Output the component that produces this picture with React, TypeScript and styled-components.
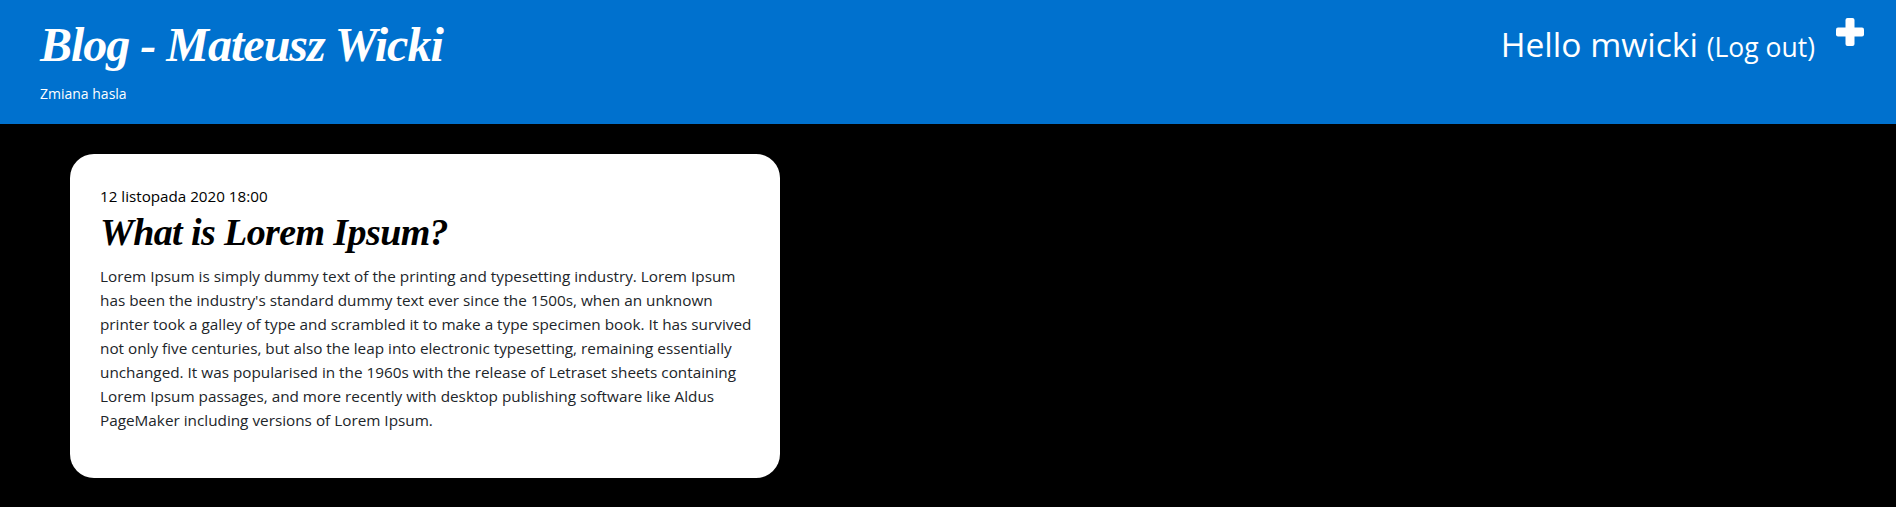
import { createGlobalStyle } from "styled-components";
import styled from "styled-components";

const GlobalStyle = createGlobalStyle`
	html, body {
		margin: 0;
		padding: 0;
		background: #000;
		font-family: "Open Sans", "Noto Sans", sans-serif;
	}
`;

const Header = styled.header`
	height: 124px;
	background-color: #0071ce;
	color: #fff;
	display: flex;
	justify-content: space-between;
	padding: 0 32px 0 40px;
`;

const Brand = styled.div`
	display: flex;
	flex-direction: column;
`;

const BlogTitle = styled.h1`
	margin: 15px 0 0;
	font-family: "Liberation Serif", serif;
	font-style: italic;
	font-weight: 700;
	font-size: 48px;
	line-height: 60px;
	letter-spacing: -1px;
`;

const NavLink = styled.a`
	margin-top: 8px;
	font-size: 14px;
	line-height: 21px;
	color: #fff;
`;

const UserArea = styled.div`
	display: flex;
	align-items: flex-start;
	gap: 21px;
`;

const Greeting = styled.div`
	margin-top: 22px;
	font-size: 33.6px;
	line-height: 44px;
`;

const LogOut = styled.a`
	font-size: 26.5px;
	color: #fff;
`;

const AddIcon = styled.svg`
	width: 28px;
	height: 28px;
	margin-top: 18px;
	fill: #fff;
`;

const Main = styled.main`
	padding: 30px 0 29px 70px;
`;

const Card = styled.article`
	width: 710px;
	height: 324px;
	box-sizing: border-box;
	padding: 31px 24px 31px 30px;
	background: #fff;
	border-radius: 24px;
`;

const PostDate = styled.div`
	font-size: 15.2px;
	line-height: 22px;
	color: #000;
`;

const PostTitle = styled.h2`
	margin: 2px 0 9px;
	font-family: "Liberation Serif", serif;
	font-style: italic;
	font-weight: 700;
	font-size: 38px;
	line-height: 46px;
	letter-spacing: -0.6px;
	color: #000;
`;

const PostBody = styled.p`
	margin: 0;
	font-size: 15.3px;
	line-height: 24px;
	color: #212529;
`;

export default function App() {
	return (
		<>
			<GlobalStyle />
			<Header>
				<Brand>
					<BlogTitle>Blog - Mateusz Wicki</BlogTitle>
					<NavLink>Zmiana hasla</NavLink>
				</Brand>
				<UserArea>
					<Greeting>
						Hello mwicki <LogOut>(Log out)</LogOut>
					</Greeting>
					<AddIcon viewBox="0 0 28 28">
						<rect x="9.5" y="0" width="9" height="28" rx="2" />
						<rect x="0" y="9.5" width="28" height="9" rx="2" />
					</AddIcon>
				</UserArea>
			</Header>
			<Main>
				<Card>
					<PostDate>12 listopada 2020 18:00</PostDate>
					<PostTitle>What is Lorem Ipsum?</PostTitle>
					<PostBody>
						Lorem Ipsum is simply dummy text of the printing and typesetting industry. Lorem Ipsum has been the industry's standard dummy text ever since the 1500s, when an unknown printer took a galley of type and scrambled it to make a type specimen book. It has survived not only five centuries, but also the leap into electronic typesetting, remaining essentially unchanged. It was popularised in the 1960s with the release of Letraset sheets containing Lorem Ipsum passages, and more recently with desktop publishing software like Aldus PageMaker including versions of Lorem Ipsum.
					</PostBody>
				</Card>
			</Main>
		</>
	);
}
